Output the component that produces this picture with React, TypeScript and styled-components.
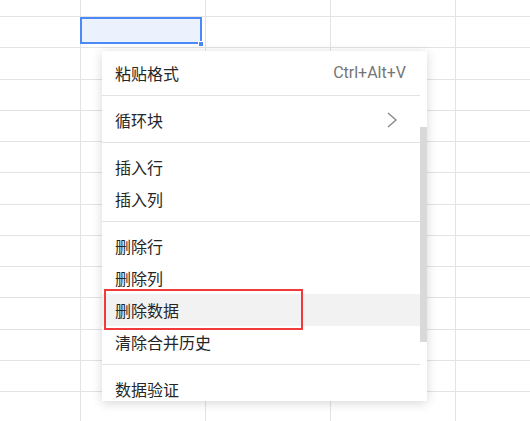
import styled, { createGlobalStyle } from 'styled-components';

const GlobalStyle = createGlobalStyle`
  html, body {
    margin: 0;
    padding: 0;
    background: #ffffff;
    overflow: hidden;
  }
  body {
    font-family: "Noto Sans CJK SC", "Noto Sans", sans-serif;
  }
`;

const Sheet = styled.div`
  position: relative;
  width: 530px;
  height: 421px;
  overflow: hidden;
`;

const Grid = styled.div`
  display: grid;
  grid-template-columns: 81px 125px 125px 125px 200px;
  grid-template-rows: 17px repeat(13, 31.25px);
`;

const Cell = styled.div`
  box-sizing: border-box;
  border-right: 1px solid #e3e3e3;
  border-bottom: 1px solid #e3e3e3;
`;

const Selection = styled.div`
  position: absolute;
  left: 80px;
  top: 17px;
  width: 122px;
  height: 27px;
  box-sizing: border-box;
  border: 2px solid #4b89f7;
  background: #ebf2fe;
`;

const FillHandle = styled.div`
  position: absolute;
  right: -3px;
  bottom: -4px;
  width: 4px;
  height: 4px;
  background: #4b89f7;
  outline: 1px solid #ffffff;
`;

const Menu = styled.div`
  position: absolute;
  left: 102px;
  top: 51px;
  width: 325px;
  height: 350px;
  background: #ffffff;
  box-shadow: 0 2px 10px rgba(0, 0, 0, 0.16);
  overflow: hidden;
`;

const MenuList = styled.div`
  width: 318px;
  display: flex;
  flex-direction: column;
`;

const Section = styled.div`
  display: flex;
  flex-direction: column;
  padding: 8px 0 6px;
  border-top: 1px solid #e3e3e3;

  &:first-child {
    padding-top: 6px;
    border-top: none;
  }
`;

const Item = styled.div<{ $active?: boolean }>`
  position: relative;
  height: 32px;
  display: flex;
  align-items: center;
  justify-content: space-between;
  padding: 0 14px 0 13px;
  background: ${(p) => (p.$active ? '#f2f2f2' : 'transparent')};
  color: #262626;
  font-size: 16px;
  line-height: 32px;
`;

const Shortcut = styled.span`
  font-family: Roboto, "Liberation Sans", sans-serif;
  font-size: 16px;
  color: #757575;
`;

const Chevron = styled.svg`
  width: 12px;
  height: 16px;
  margin-right: 8px;
`;

const Annotation = styled.div`
  position: absolute;
  left: 2px;
  top: -5px;
  width: 199px;
  height: 41px;
  box-sizing: border-box;
  border: 2px solid #f23a3a;
  pointer-events: none;
`;

const ScrollThumb = styled.div`
  position: absolute;
  right: 0;
  top: 76px;
  width: 7px;
  height: 215px;
  background: #d9d9d9;
`;

const sections: { label: string; shortcut?: string; submenu?: boolean; active?: boolean }[][] = [
  [{ label: '粘贴格式', shortcut: 'Ctrl+Alt+V' }],
  [{ label: '循环块', submenu: true }],
  [{ label: '插入行' }, { label: '插入列' }],
  [
    { label: '删除行' },
    { label: '删除列' },
    { label: '删除数据', active: true },
    { label: '清除合并历史' },
  ],
  [{ label: '数据验证' }],
];

function App() {
  const cells = Array.from({ length: 14 * 5 });

  return (
    <>
      <GlobalStyle />
      <Sheet>
        <Grid>
          {cells.map((_, i) => (
            <Cell key={i} />
          ))}
        </Grid>

        <Selection>
          <FillHandle />
        </Selection>

        <Menu>
          <MenuList>
            {sections.map((items, si) => (
              <Section key={si}>
                {items.map((item) => (
                  <Item key={item.label} $active={item.active}>
                    <span>{item.label}</span>
                    {item.shortcut && <Shortcut>{item.shortcut}</Shortcut>}
                    {item.submenu && (
                      <Chevron viewBox="0 0 12 16">
                        <polyline
                          points="2,1 10,8 2,15"
                          fill="none"
                          stroke="#8a8a8a"
                          strokeWidth="1.4"
                        />
                      </Chevron>
                    )}
                    {item.active && <Annotation />}
                  </Item>
                ))}
              </Section>
            ))}
          </MenuList>
          <ScrollThumb />
        </Menu>
      </Sheet>
    </>
  );
}

export default App;
